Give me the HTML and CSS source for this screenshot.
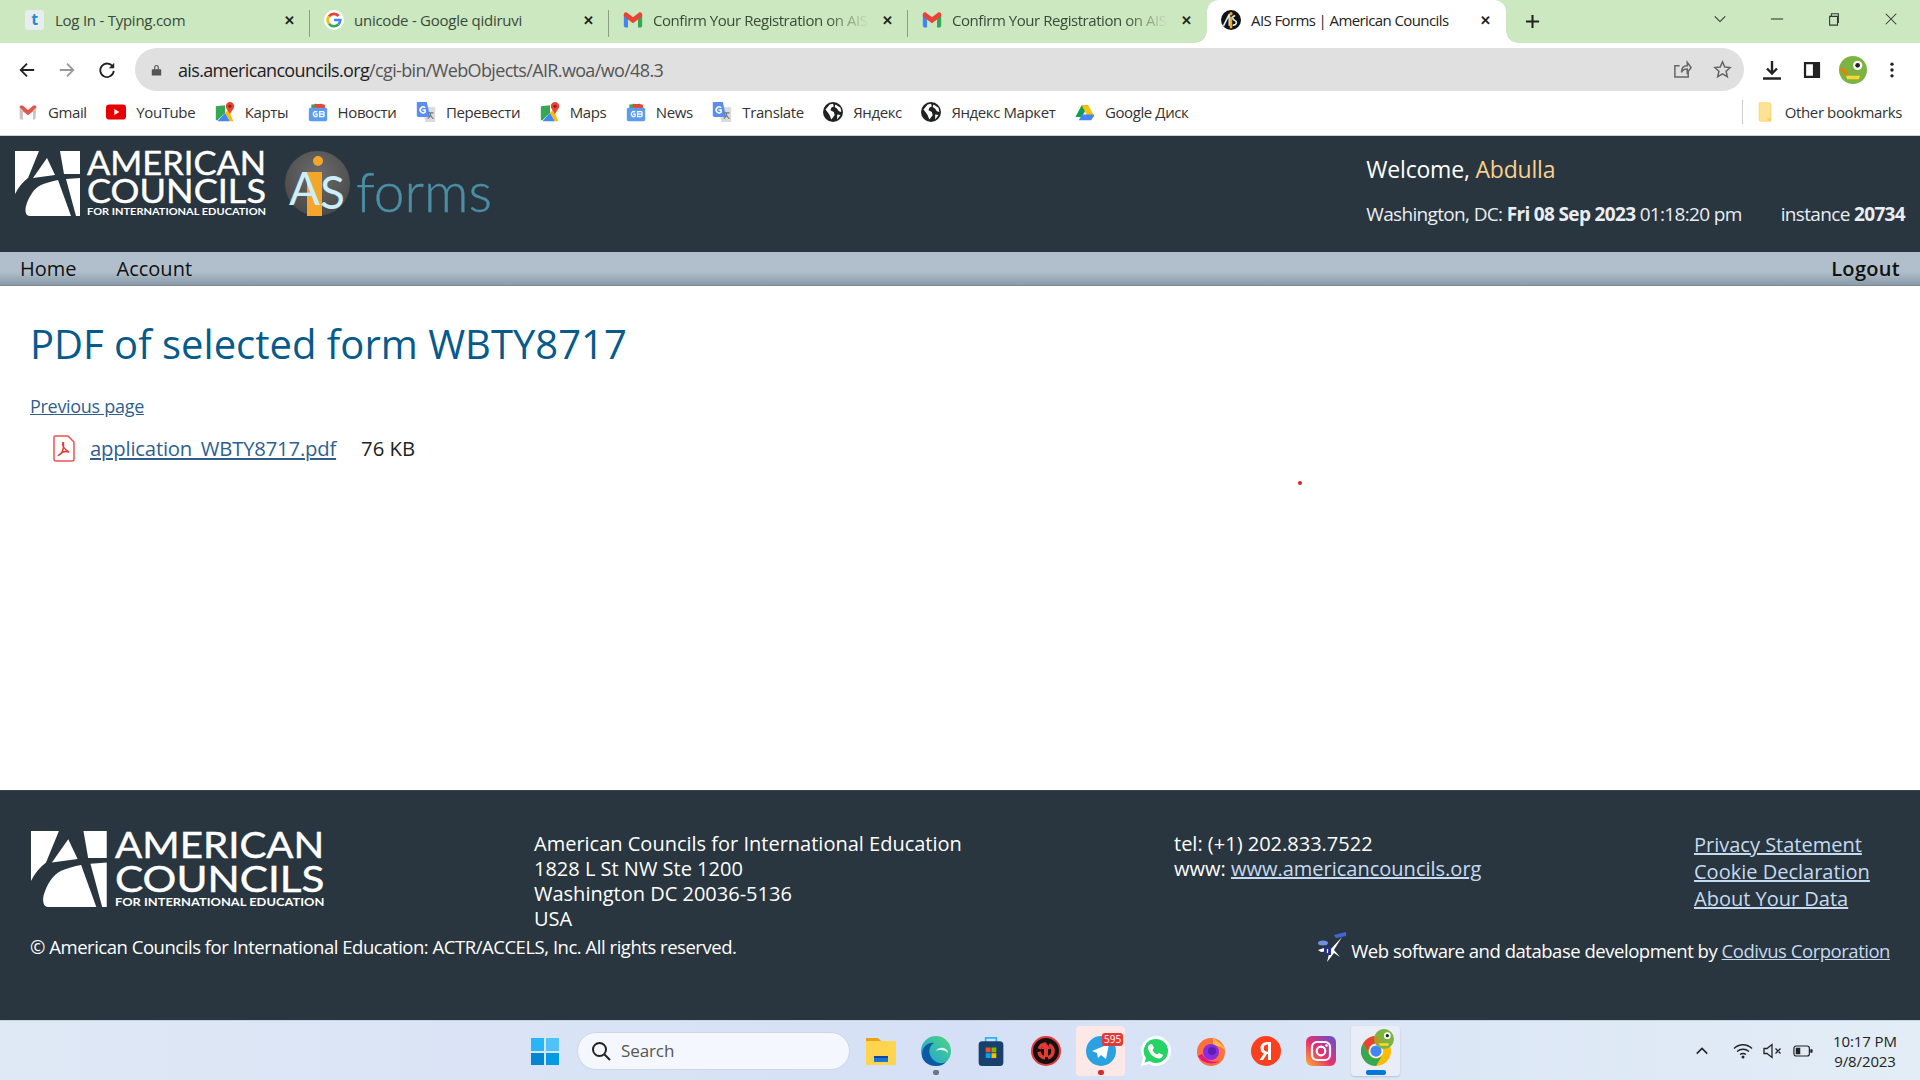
FILE: index.html
```html
<!DOCTYPE html>
<html lang="en">
<head>
    <meta charset="UTF-8">
    <title>AIS Forms | American Councils</title>
    <link rel="stylesheet" href="styles.css">
</head>
<body>

    <svg class="defs" width="0" height="0">
        <symbol id="i-gmail" viewBox="0 0 24 24">
            <path fill="#4285f4" d="M1 5h5v16H3a2 2 0 0 1-2-2z"/>
            <path fill="#34a853" d="M23 5h-5v16h3a2 2 0 0 0 2-2z"/>
            <path fill="#ea4335" d="M1 5.5C1 3 3.5 2 5 3.2l7 5.6 7-5.6c1.500-1.200 4-.2 4 2.300v2L18 11.500 12 16 6 11.500 1 7.500z"/>
        </symbol>
        <symbol id="i-gmailflat" viewBox="0 0 24 24">
            <path fill="#c9c5c2" d="M2 5h4v16H3.500A1.500 1.500 0 0 1 2 19.500zM22 5h-4v16h1.500a1.500 1.500 0 0 0 1.500-1.500z"/>
            <path fill="#e0564a" d="M2 6.500C2 4 4 3 6 4.500l6 5 6-5c2-1.500 4-.5 4 2L18 10v1l-6 5-6-5v-1z"/>
        </symbol>
        <symbol id="i-google" viewBox="0 0 24 24">
            <circle cx="12" cy="12" r="12" fill="#fff"/>
            <path fill="none" stroke="#ea4335" stroke-width="3.200" d="M17.600 7.200A7.500 7.500 0 0 0 6 7.600"/>
            <path fill="none" stroke="#fbbc05" stroke-width="3.200" d="M6 7.600a7.500 7.500 0 0 0 0 8.800"/>
            <path fill="none" stroke="#34a853" stroke-width="3.200" d="M6 16.400a7.500 7.500 0 0 0 11.200 1"/>
            <path fill="none" stroke="#4285f4" stroke-width="3.200" d="M17.200 17.400a7.500 7.500 0 0 0 2.300-5.400H12"/>
        </symbol>
        <symbol id="i-maps" viewBox="0 0 24 24">
            <path fill="#34a853" d="M1 5l11-1v9L3 22H1z"/>
            <path fill="#4285f4" d="M3 23l9-10 6 10z"/>
            <path fill="#fbbc05" d="M12 13l4-4 6 14h-4z"/>
            <path fill="#ea4335" d="M18 0a5 5 0 0 1 5 5c0 3.500-4 6-5 10-1-4-5-6.500-5-10a5 5 0 0 1 5-5z"/>
            <circle cx="18" cy="5" r="1.800" fill="#8e1c14"/>
        </symbol>
        <symbol id="i-globe" viewBox="0 0 24 24">
            <circle cx="12" cy="12" r="12" fill="#202124"/>
            <path fill="#fff" d="M3 9l5-6 4-1 1 3-3 2-1 3 4 2 1 4-4 5-2-5-2-3zM15 3l6 4 1 5-3-1-2-3-3-2zM17 15l4 .5-4 5.500z"/>
        </symbol>
        <symbol id="i-drive" viewBox="0 0 24 24">
            <path fill="#0f9d58" d="M8 3h8l-8 14H.500z" transform="translate(0 1)"/>
            <path fill="#ffc107" d="M8 4h8l7.500 14h-8z"/>
            <path fill="#4285f4" d="M4.500 22l4-7H23.500l-4 7z"/>
        </symbol>
        <symbol id="i-ais" viewBox="0 0 24 24">
            <circle cx="12" cy="12" r="12" fill="#111"/>
            <path fill="none" stroke="#cfeefc" stroke-width="2" d="M3 19L10 5v14M17 7c-5 0-3 5 0 6s1 6-3 5"/>
            <rect x="10.500" y="8" width="3" height="14" fill="#f4a62a"/>
            <circle cx="12" cy="4.500" r="2" fill="#f4a62a"/>
        </symbol>
        <symbol id="i-chrome" viewBox="0 0 48 48">
            <circle cx="24" cy="24" r="24" fill="#fbbc05"/>
            <path fill="#ea4335" d="M24 0a24 24 0 0 1 20.800 12H24a12 12 0 0 0-10.400 18L3.200 12A24 24 0 0 1 24 0z"/>
            <path fill="#34a853" d="M3.200 12l10.400 18A12 12 0 0 0 34.400 30L24 48A24 24 0 0 1 3.200 12z"/>
            <circle cx="24" cy="24" r="11.500" fill="#fff"/>
            <circle cx="24" cy="24" r="9" fill="#4285f4"/>
        </symbol>
        <symbol id="i-avatar" viewBox="0 0 24 24">
            <circle cx="12" cy="12" r="12" fill="#7cb342"/>
            <path fill="#f57c00" d="M2 9l6 6-2 2-5-5z"/>
            <path fill="#fdd835" d="M6 17h12l-1 3H7z"/>
            <circle cx="16" cy="8" r="4" fill="#fff"/>
            <circle cx="16" cy="8" r="2" fill="#222"/>
        </symbol>
        <symbol id="i-mark" viewBox="0 0 65 65">
            <path fill="#fff" d="M0 0h24L13 27Q5 33 0 43z"/>
            <path fill="#fff" d="M32 7l8 17-22 3z"/>
            <path fill="#fff" d="M45 0h20v23l-16 0z"/>
            <path fill="#fff" d="M15 65c-5 0-5-6-4-10 2-8 8-18 15-21 5-2 11-4 17-5l13 36z"/>
            <path fill="#fff" d="M51 28l14-1v38h-4z"/>
        </symbol>
    </svg>

    <div class="tabstrip">
        <div class="tab">
            <span class="typing-icon">t</span>
            <span class="tab-title">Log In - Typing.com</span>
            <span class="tab-close">✕</span>
        </div>
        <div class="tab">
            <svg class="tab-icon"><use href="#i-google"/></svg>
            <span class="tab-title">unicode - Google qidiruvi</span>
            <span class="tab-close">✕</span>
        </div>
        <div class="tab">
            <svg class="tab-icon"><use href="#i-gmail"/></svg>
            <span class="tab-title fade">Confirm Your Registration on AIS</span>
            <span class="tab-close">✕</span>
        </div>
        <div class="tab no-sep">
            <svg class="tab-icon"><use href="#i-gmail"/></svg>
            <span class="tab-title fade">Confirm Your Registration on AIS</span>
            <span class="tab-close">✕</span>
        </div>
        <div class="tab active">
            <svg class="tab-icon"><use href="#i-ais"/></svg>
            <span class="tab-title">AIS Forms | American Councils</span>
            <span class="tab-close">✕</span>
        </div>
        <svg class="new-tab" viewBox="0 0 16 16"><path d="M8 1v14M1 8h14"/></svg>
        <div class="window-btns">
            <svg viewBox="0 0 16 16"><path d="M2 5l6 6 6-6"/></svg>
            <svg viewBox="0 0 16 16"><path d="M1 8h14"/></svg>
            <svg viewBox="0 0 16 16"><path d="M3 5h9v10H3zM5 5V2h8v10h-1"/></svg>
            <svg viewBox="0 0 16 16"><path d="M2 2l12 12M14 2L2 14"/></svg>
        </div>
    </div>

    <div class="toolbar">
        <svg class="tool-btn" viewBox="0 0 20 20"><path d="M18 10H3M10 3l-7 7 7 7"/></svg>
        <svg class="tool-btn off" viewBox="0 0 20 20"><path d="M2 10h15M10 3l7 7-7 7"/></svg>
        <svg class="tool-btn" viewBox="0 0 20 20"><path d="M16.500 6.500A7.500 7.500 0 1 0 17.500 11"/><path class="solid" d="M18 2v6h-6z"/></svg>
        <div class="urlbar">
            <svg class="lock" viewBox="0 0 14 16"><path d="M2 7h10a1 1 0 0 1 1 1v7H1V8a1 1 0 0 1 1-1zM4 7V4.500a3 3 0 0 1 6 0V7H8.500V4.500a1.500 1.500 0 0 0-3 0V7z"/></svg>
            <span class="url"><span class="host">ais.americancouncils.org</span>/cgi-bin/WebObjects/AIR.woa/wo/48.3</span>
            <svg class="url-icon share" viewBox="0 0 20 20"><path d="M16 12v6H2V6h5M9 13c0-5 3-7 6-7V2.500L19 8l-4 5V9.500c-3 0-5 1-6 3.500z"/></svg>
            <svg class="url-icon" viewBox="0 0 20 20"><path d="M10 2l2.400 5.400 5.600.6-4.200 3.800 1.200 5.700L10 14.600 5 17.500l1.200-5.700L2 8l5.600-.6z"/></svg>
        </div>
        <svg class="tool-btn download" viewBox="0 0 20 20"><path d="M10 1v12M5 8.500l5 5 5-5M1 18.500h18" stroke-width="2.400"/></svg>
        <svg class="tool-btn panel" viewBox="0 0 20 20"><path class="solid" d="M1 1h18v18H1zM3.500 3.500v13H11v-13z"/></svg>
        <svg class="avatar"><use href="#i-avatar"/></svg>
        <svg class="tool-btn menu" viewBox="0 0 20 20"><circle class="solid" cx="10" cy="3.500" r="1.900"/><circle class="solid" cx="10" cy="10" r="1.900"/><circle class="solid" cx="10" cy="16.500" r="1.900"/></svg>
    </div>

    <div class="bookmarks">
        <a class="bm"><svg><use href="#i-gmailflat"/></svg>Gmail</a>
        <a class="bm"><svg viewBox="0 0 24 24"><rect y="3" width="24" height="18" rx="4" fill="#e60000"/><path fill="#fff" d="M10 8.500l6 3.500-6 3.500z"/></svg>YouTube</a>
        <a class="bm"><svg><use href="#i-maps"/></svg>Карты</a>
        <a class="bm">
            <svg viewBox="0 0 24 24"><path fill="#34a853" d="M4 3l13-1 1 6H4z"/><path fill="#ea4335" d="M8 2l12 1 1 6H8z"/><rect x="1" y="7" width="22" height="16" rx="2" fill="#5b9bf0"/><path fill="none" stroke="#fff" stroke-width="1.500" d="M11 12a3 3 0 1 0 0 5v-2.500H8.500M14 11.500h4a1.500 1.500 0 0 1 0 3h-4zM14 14.500h4a1.500 1.500 0 0 1 0 3h-4z"/></svg>
            Новости
        </a>
        <a class="bm">
            <svg viewBox="0 0 24 24"><path fill="#dadce0" d="M8 6h15v18H11z"/><path fill="#5b8def" d="M1 0h12l4 18H3a2 2 0 0 1-2-2z"/><path fill="none" stroke="#fff" stroke-width="1.800" d="M11 7a3.500 3.500 0 1 0 0 5V9.500H8"/><path fill="none" stroke="#70757a" stroke-width="1.300" d="M14 13h7M17.500 13c0 3-1.500 6-3.500 7M17 15c1 2 2 4 4 5"/></svg>
            Перевести
        </a>
        <a class="bm"><svg><use href="#i-maps"/></svg>Maps</a>
        <a class="bm">
            <svg viewBox="0 0 24 24"><path fill="#34a853" d="M4 3l13-1 1 6H4z"/><path fill="#ea4335" d="M8 2l12 1 1 6H8z"/><rect x="1" y="7" width="22" height="16" rx="2" fill="#5b9bf0"/><path fill="none" stroke="#fff" stroke-width="1.500" d="M11 12a3 3 0 1 0 0 5v-2.500H8.500M14 11.500h4a1.500 1.500 0 0 1 0 3h-4zM14 14.500h4a1.500 1.500 0 0 1 0 3h-4z"/></svg>
            News
        </a>
        <a class="bm">
            <svg viewBox="0 0 24 24"><path fill="#dadce0" d="M8 6h15v18H11z"/><path fill="#5b8def" d="M1 0h12l4 18H3a2 2 0 0 1-2-2z"/><path fill="none" stroke="#fff" stroke-width="1.800" d="M11 7a3.500 3.500 0 1 0 0 5V9.500H8"/><path fill="none" stroke="#70757a" stroke-width="1.300" d="M14 13h7M17.500 13c0 3-1.500 6-3.500 7M17 15c1 2 2 4 4 5"/></svg>
            Translate
        </a>
        <a class="bm"><svg><use href="#i-globe"/></svg>Яндекс</a>
        <a class="bm"><svg><use href="#i-globe"/></svg>Яндекс Маркет</a>
        <a class="bm"><svg><use href="#i-drive"/></svg>Google Диск</a>
        <a class="bm other"><svg viewBox="0 0 24 24"><path fill="#fde293" stroke="#f6d365" d="M5 1h12a2 2 0 0 1 2 2v20H7a2 2 0 0 1-2-2z"/><path fill="#f9d45c" d="M15 23v-4h4v4z"/></svg>Other bookmarks</a>
    </div>

    <header class="site-header">
        <div class="brand">
            <svg class="logo" viewBox="0 0 250 65">
                <use href="#i-mark" width="65" height="65"/>
                <text x="72" y="23.500" class="logo-big" textLength="179" lengthAdjust="spacingAndGlyphs">AMERICAN</text>
                <text x="72" y="52" class="logo-big" textLength="179" lengthAdjust="spacingAndGlyphs">COUNCILS</text>
                <text x="72" y="64" class="logo-small" textLength="179" lengthAdjust="spacingAndGlyphs">FOR INTERNATIONAL EDUCATION</text>
            </svg>
            <svg class="ais-logo" viewBox="0 0 210 65">
                <defs>
                    <radialGradient id="ais-bg" cx="0.5" cy="0.35" r="0.7">
                        <stop offset="0" stop-color="#6b6b6b"/>
                        <stop offset="1" stop-color="#474747"/>
                    </radialGradient>
                </defs>
                <circle cx="32.500" cy="32.500" r="32.500" fill="url(#ais-bg)"/>
                <rect x="22" y="21" width="15" height="44" fill="#f4a62a"/>
                <circle cx="33" cy="10" r="5" fill="#f4a62a"/>
                <text x="4" y="54" class="ais-letter">A</text>
                <text x="35" y="58" class="ais-letter">S</text>
                <text x="71" y="61" class="forms-word" textLength="136" lengthAdjust="spacingAndGlyphs">forms</text>
            </svg>
        </div>
        <div class="userbox">
            <div class="welcome">Welcome, <span class="username">Abdulla</span></div>
            <div class="session">
                <span>Washington, DC: <b>Fri 08 Sep 2023</b> 01:18:20 pm</span>
                <span>instance <b>20734</b></span>
            </div>
        </div>
    </header>

    <nav class="main-nav">
        <a>Home</a>
        <a>Account</a>
        <a class="logout">Logout</a>
    </nav>

    <main class="content">
        <h1>PDF of selected form WBTY8717</h1>
        <a class="prev" href="#">Previous page</a>
        <div class="file-row">
            <svg class="pdf-icon" viewBox="0 0 22 27">
                <path fill="#fff" stroke="#ef5350" stroke-width="1.500" d="M2 1h13l6 6v17a2 2 0 0 1-2 2H3a2 2 0 0 1-2-2V2a1 1 0 0 1 1-1z"/>
                <path fill="none" stroke="#e53935" stroke-width="1.400" d="M10 7c-1 3 1 7 6 10-3-1-7-.5-10 3 3-1 5-6 4.500-13"/>
            </svg>
            <a class="file-link" href="#">application_WBTY8717.pdf</a>
            <span class="file-size">76 KB</span>
        </div>
        <span class="red-dot"></span>
    </main>

    <footer class="site-footer">
        <div class="footer-top">
            <svg class="footer-logo" viewBox="0 0 250 65">
                <use href="#i-mark" width="65" height="65"/>
                <text x="72" y="23.500" class="logo-big" textLength="179" lengthAdjust="spacingAndGlyphs">AMERICAN</text>
                <text x="72" y="52" class="logo-big" textLength="179" lengthAdjust="spacingAndGlyphs">COUNCILS</text>
                <text x="72" y="64" class="logo-small" textLength="179" lengthAdjust="spacingAndGlyphs">FOR INTERNATIONAL EDUCATION</text>
            </svg>
            <div>
                American Councils for International Education<br>
                1828 L St NW Ste 1200<br>
                Washington DC 20036-5136<br>
                USA
            </div>
            <div>
                tel: (+1) 202.833.7522<br>
                www: <a href="#">www.americancouncils.org</a>
            </div>
            <div class="footer-links">
                <a href="#">Privacy Statement</a>
                <a href="#">Cookie Declaration</a>
                <a href="#">About Your Data</a>
            </div>
        </div>
        <div class="footer-bottom">
            <span class="copyright">© American Councils for International Education: ACTR/ACCELS, Inc. All rights reserved.</span>
            <div class="credit">
                <svg class="codivus" viewBox="0 0 30 30">
                    <path fill="#3f66d6" d="M17 3l12-3v4l-10 2z"/>
                    <ellipse cx="6" cy="11" rx="5" ry="2.500" fill="#6f8fe0"/>
                    <path fill="#fff" d="M25 5L13 18l-3 12 7-9 6 4-6-7zM1 18l9-3 1 4-7 1z"/>
                    <path fill="#25308a" d="M7 15h7v8H7z"/>
                    <path stroke="#fff" stroke-width="1.200" d="M10.500 17v4"/>
                </svg>
                <span class="credit-text">Web software and database development by <a href="#">Codivus Corporation</a></span>
            </div>
        </div>
    </footer>

    <div class="taskbar">
        <svg class="win-logo" viewBox="0 0 28 28">
            <path fill="#29b6f6" d="M0 1h13v13H0z"/><path fill="#4fc3f7" d="M15 1h13v13H15z"/>
            <path fill="#0288d1" d="M0 16h13v12H0z"/><path fill="#039be5" d="M15 16h13v12H15z"/>
        </svg>
        <div class="search">
            <svg viewBox="0 0 20 20"><circle cx="8.500" cy="8.500" r="6.500"/><path d="M13.500 13.500L19 19"/></svg>
            <span>Search</span>
        </div>
        <div class="apps">
            <div class="app">
                <svg viewBox="0 0 30 30">
                    <path fill="#e8a317" d="M0 2h12l3 3h-15z"/><path fill="#ffd54f" d="M0 5h30v24H0z"/>
                    <path fill="#1976d2" d="M8 20h14v6H8z"/><path fill="#0d47a1" d="M8 20h14v2H8z"/>
                </svg>
            </div>
            <div class="app">
                <svg viewBox="0 0 30 30">
                    <defs><linearGradient id="edge" x1="0" y1="1" x2="1" y2="0"><stop offset="0" stop-color="#1b9de2"/><stop offset="1" stop-color="#4fd87a"/></linearGradient></defs>
                    <circle cx="15" cy="15" r="15" fill="url(#edge)"/>
                    <path fill="#0c59a4" d="M1 19C1 10 8 6 13 7c-5 3-6 9-3 14s9 8 15 5c-3 3-6 4-10 4C7 30 1 25 1 19z"/>
                    <path fill="#dff3fb" d="M15 15c1-3 5-4 8-3 3 1 4 3 4 5-2-2-4-3-7-3-2 0-4 0-5 1z"/>
                </svg>
                <i class="dot grey"></i>
            </div>
            <div class="app">
                <svg viewBox="0 0 30 34">
                    <path fill="none" stroke="#29b6f6" stroke-width="2" d="M9 7V2h12v5"/>
                    <rect x="1" y="6" width="28" height="28" rx="4" fill="#17406d"/>
                    <path fill="#f25022" d="M9 13h5.500v5.500H9z"/><path fill="#7fba00" d="M15.500 13H21v5.500h-5.500z"/>
                    <path fill="#00a4ef" d="M9 19.500h5.500V25H9z"/><path fill="#ffb900" d="M15.500 19.500H21V25h-5.500z"/>
                </svg>
            </div>
            <div class="app">
                <svg viewBox="0 0 30 30">
                    <circle cx="15" cy="15" r="14" fill="#111" stroke="#e53935" stroke-width="2"/>
                    <circle cx="15" cy="15" r="7" fill="none" stroke="#e53935" stroke-width="3.500" stroke-dasharray="9 3"/>
                    <path fill="#e53935" d="M15 7l5 6h-3v8h-4v-8h-3z"/>
                </svg>
            </div>
            <div class="app tile-red">
                <svg viewBox="0 0 30 30">
                    <circle cx="15" cy="15" r="15" fill="#2aa1e0"/>
                    <path fill="#fff" d="M6 15l17-7-3 15-5-4-3 3-1-5z"/>
                </svg>
                <span class="badge">595</span>
                <i class="dot red"></i>
            </div>
            <div class="app">
                <svg viewBox="0 0 30 30">
                    <path fill="#fff" d="M15 0a15 15 0 0 1 0 30c-3 0-5-1-7-2l-8 2 2-8A15 15 0 0 1 15 0z"/>
                    <path fill="#25d366" d="M15 3a12 12 0 0 1 0 24c-2.500 0-4.500-.8-6.500-2l-5 1.500L5 22A12 12 0 0 1 15 3z"/>
                    <path fill="#fff" d="M11 8l2 4-1.500 2c1 2 2.500 3.500 4.500 4.500l2-1.500 4 2c-.5 2.500-2 3.500-4 3.500-5 0-11-6-11-11 0-2 1.500-3.500 4-3.500z"/>
                </svg>
            </div>
            <div class="app">
                <svg viewBox="0 0 30 30">
                    <circle cx="15" cy="16" r="14" fill="#ff7139"/>
                    <path fill="#ffbd4f" d="M17 0c1 5 9 6 12 14-4-4-8-4-12-5z"/>
                    <circle cx="15" cy="16" r="8" fill="#8a2be2"/>
                    <circle cx="16" cy="15" r="4" fill="#5a1fb0"/>
                    <path fill="#e31587" d="M2 20c4 7 14 10 22 5-7 2-14 0-18-7z"/>
                </svg>
            </div>
            <div class="app">
                <svg viewBox="0 0 30 30">
                    <circle cx="15" cy="15" r="15" fill="#fc3f1d"/>
                    <path fill="#fff" d="M17 6h3v18h-3v-6h-1l-4 6H8.500l4.500-6.500C10.500 16.500 9.500 15 9.500 12c0-4 3-6 7.500-6zm0 2.500c-3 0-4.300 1.300-4.300 3.700 0 2.300 1.300 3.500 4.300 3.500z"/>
                </svg>
            </div>
            <div class="app">
                <svg viewBox="0 0 30 30">
                    <defs><linearGradient id="insta" x1="0" y1="1" x2="1" y2="0"><stop offset="0" stop-color="#fdb32b"/><stop offset="0.45" stop-color="#e8306f"/><stop offset="1" stop-color="#5b51d8"/></linearGradient></defs>
                    <rect width="30" height="30" rx="6" fill="url(#insta)"/>
                    <rect x="6" y="6" width="18" height="18" rx="5" fill="none" stroke="#fff" stroke-width="2.200"/>
                    <circle cx="15" cy="15" r="4.300" fill="none" stroke="#fff" stroke-width="2.200"/>
                    <circle cx="20.500" cy="9.500" r="1.300" fill="#fff"/>
                </svg>
            </div>
            <div class="app tile-grey">
                <svg><use href="#i-chrome"/></svg>
                <svg class="app-avatar"><use href="#i-avatar"/></svg>
                <i class="dot blue"></i>
            </div>
        </div>
        <div class="tray">
            <svg class="tray-icon" viewBox="0 0 16 16"><path d="M2 11l6-6 6 6"/></svg>
            <svg class="tray-icon" viewBox="0 0 20 16"><path d="M1 5.500c5-5 13-5 18 0M4 8.500c3.500-3 8.500-3 12 0M7 11.500c2-1.300 4-1.300 6 0"/><circle class="solid" cx="10" cy="14" r="1.500"/></svg>
            <svg class="tray-icon" viewBox="0 0 20 16"><path d="M1 5.500h3L9 1.500v13l-5-4H1zM12.500 5.500l5 5M17.500 5.500l-5 5"/></svg>
            <svg class="tray-icon" viewBox="0 0 22 14"><rect x="1" y="1.500" width="17" height="11" rx="2.500"/><path class="solid" d="M3 3.500h5v7H3zM19 5h2.500v4H19z"/></svg>
            <div class="clock">10:17 PM<br>9/8/2023</div>
        </div>
    </div>

</body>
</html>
```

FILE: styles.css
```css
body {
    font-family: "Open Sans", "Noto Sans", sans-serif;
    margin: 0;
    width: 1920px;
    height: 1080px;
    overflow: hidden;
    display: flex;
    flex-direction: column;
    background-color: white;
    color: #222;
}

.defs {
    position: absolute;
}

/* browser */

.tabstrip {
    height: 43px;
    padding-left: 11px;
    flex: none;
    display: flex;
    align-items: stretch;
    background-color: #cce8c0;
}

.tab {
    width: 299px;
    flex: none;
    box-sizing: border-box;
    padding: 0 13px 3px 14px;
    position: relative;
    display: flex;
    align-items: center;
    gap: 10px;
    font-size: 15px;
    letter-spacing: -0.25px;
    color: #3a4a38;
}

.tab::after {
    content: "";
    position: absolute;
    right: 0;
    top: 10px;
    bottom: 6px;
    width: 1px;
    background-color: #8b9f84;
}

.tab.no-sep::after {
    display: none;
}

.tab.active {
    height: 45px;
    padding-bottom: 5px;
    letter-spacing: -0.6px;
    background-color: white;
    border-radius: 12px 12px 0 0;
    color: #222;
}

.tab.active::before,
.tab.active::after {
    content: "";
    position: absolute;
    top: auto;
    bottom: 2px;
    width: 12px;
    height: 12px;
    background: radial-gradient(circle at 0 0, transparent 11.500px, white 12px);
}

.tab.active::before {
    left: -12px;
}

.tab.active::after {
    right: -12px;
    background: radial-gradient(circle at 100% 0, transparent 11.500px, white 12px);
}

.tab-icon {
    width: 20px;
    height: 20px;
    flex: none;
}

.typing-icon {
    width: 19px;
    height: 20px;
    margin-right: 1px;
    flex: none;
    border-radius: 3px;
    background-color: #e8edf0;
    color: #1d8fd8;
    font-weight: 700;
    font-size: 16px;
    line-height: 19px;
    text-align: center;
}

.tab-title {
    flex: 1;
    white-space: nowrap;
}

.tab-title.fade {
    letter-spacing: -0.45px;
    -webkit-mask-image: linear-gradient(to right, black 80%, transparent 100%);
    mask-image: linear-gradient(to right, black 80%, transparent 100%);
}

.tab-close {
    width: 16px;
    flex: none;
    font-size: 13px;
    font-weight: 700;
    text-align: center;
    color: #222;
}

.new-tab {
    width: 15px;
    height: 15px;
    margin: 14px 0 0 19px;
    fill: none;
    stroke: #222;
    stroke-width: 2.200;
}

.window-btns {
    margin-left: auto;
    padding-right: 22px;
    display: flex;
    gap: 43px;
    align-items: flex-start;
}

.window-btns svg {
    width: 14px;
    height: 14px;
    margin-top: 12px;
    fill: none;
    stroke: #333;
    stroke-width: 1.200;
}

.toolbar {
    height: 50px;
    flex: none;
    box-sizing: border-box;
    padding: 5px 19px 2px 18px;
    display: flex;
    align-items: center;
    background-color: white;
}

.toolbar > svg {
    flex: none;
}

.tool-btn {
    width: 18px;
    height: 18px;
    margin-right: 22px;
    fill: none;
    stroke: #222;
    stroke-width: 2;
}

.tool-btn.off {
    stroke: #999;
}

.tool-btn .solid {
    fill: #222;
    stroke: none;
}

.tool-btn.download {
    width: 20px;
    height: 20px;
    margin-right: 21px;
}

.tool-btn.panel {
    margin-right: 18px;
}

.tool-btn.menu {
    margin: 0;
}

.urlbar {
    width: 1609px;
    height: 43px;
    flex: none;
    margin: 0 18px 0 -3px;
    box-sizing: border-box;
    padding: 0 12px 0 16px;
    display: flex;
    align-items: center;
    border-radius: 22px;
    background-color: #e0e0e0;
    font-size: 18px;
    letter-spacing: -0.65px;
    color: #555;
}

.lock {
    width: 11px;
    height: 14px;
    margin-right: 16px;
    fill: #555;
}

.url {
    flex: 1;
}

.host {
    color: #222;
}

.url-icon {
    width: 19px;
    height: 19px;
    margin-left: 21px;
    fill: none;
    stroke: #666;
    stroke-width: 1.600;
}

.avatar {
    width: 28px;
    height: 28px;
    margin-right: 16px;
}

.bookmarks {
    height: 43px;
    flex: none;
    box-sizing: border-box;
    padding: 0 18px 5px 18px;
    display: flex;
    align-items: center;
    gap: 19.600px;
    background-color: white;
    border-bottom: 1px solid #d0d0d0;
    font-size: 15px;
    letter-spacing: -0.4px;
    color: #333;
}

.bm {
    display: flex;
    align-items: center;
    gap: 10px;
    white-space: nowrap;
}

.bm svg {
    width: 20px;
    height: 20px;
}

.bm.other {
    margin-left: auto;
    padding-left: 12px;
    border-left: 1px solid #ccc;
    height: 24px;
}

/* site header */

.site-header {
    height: 116px;
    flex: none;
    box-sizing: border-box;
    padding: 15px 15px 0 15px;
    display: flex;
    justify-content: space-between;
    background-color: #29363f;
    color: white;
}

.brand {
    display: flex;
    gap: 20px;
}

.logo,
.footer-logo,
.ais-logo {
    overflow: visible;
}

.logo {
    width: 250px;
    height: 65px;
}

.ais-logo {
    width: 210px;
    height: 65px;
}

.logo-big {
    font-family: Lato, sans-serif;
    font-size: 32px;
    fill: white;
    stroke: white;
    stroke-width: 0.400px;
}

.logo-small {
    font-family: Lato, sans-serif;
    font-weight: 700;
    font-size: 9.500px;
    fill: white;
}

.ais-letter {
    font-family: Lato, sans-serif;
    font-size: 46px;
    fill: #cdeefd;
}

.forms-word {
    font-family: Lato, sans-serif;
    font-weight: 300;
    font-size: 56px;
    fill: #4b8ea6;
    stroke: #4b8ea6;
    stroke-width: 0.400px;
}

.welcome {
    font-size: 23px;
    letter-spacing: -0.2px;
    margin-top: 2px;
    line-height: 32px;
}

.username {
    color: #fbd08e;
}

.session {
    margin-top: 16px;
    display: flex;
    gap: 39px;
    font-size: 19px;
    letter-spacing: -0.66px;
    color: #eaeef2;
}

.main-nav {
    height: 34px;
    flex: none;
    box-sizing: border-box;
    padding: 0 20px;
    display: flex;
    align-items: center;
    gap: 40px;
    background: linear-gradient(#b0bfcb 0%, #b0bfcb 60%, #8a99a8 100%);
    border-bottom: 1px solid #7d8b99;
    font-size: 20px;
    color: #111;
}

.main-nav .logout {
    margin-left: auto;
    font-weight: 600;
    letter-spacing: 0.3px;
}

/* page */

.content {
    flex: 1;
    position: relative;
    padding: 0 30px;
}

h1 {
    margin: 33px 0 0 0;
    font-size: 40px;
    font-weight: 400;
    line-height: 50px;
    color: #065a8c;
}

.prev {
    display: block;
    margin-top: 25px;
    font-size: 18px;
    letter-spacing: -0.3px;
    color: #2f5f8f;
}

.file-row {
    margin: 16px 0 0 23px;
    display: flex;
    align-items: center;
    font-size: 20.300px;
}

.pdf-icon {
    width: 22px;
    height: 27px;
    margin-right: 15px;
}

.file-link {
    color: #2f5f8f;
    letter-spacing: -0.2px;
}

.file-size {
    margin-left: 25px;
}

.red-dot {
    position: absolute;
    left: 1298px;
    top: 195px;
    width: 4px;
    height: 4px;
    border-radius: 2px;
    background-color: #e02020;
}

.site-footer {
    height: 230px;
    flex: none;
    box-sizing: border-box;
    padding: 40px 30px 0 30px;
    background-color: #29363f;
    border-top: 1px solid #34495a;
    color: white;
    font-size: 20px;
}

.site-footer a {
    color: #c6daf0;
}

.footer-top {
    display: grid;
    grid-template-columns: 504px 640px 520px auto;
    line-height: 25px;
}

.footer-logo {
    width: 294px;
    height: 76px;
}

.footer-links {
    display: flex;
    flex-direction: column;
    line-height: 27px;
}

.footer-bottom {
    display: flex;
    justify-content: space-between;
    align-items: flex-start;
    margin-top: 1px;
    font-size: 18.500px;
    letter-spacing: -0.47px;
    line-height: 26px;
}

.copyright {
    margin-top: 2px;
}

.credit {
    display: flex;
    align-items: flex-start;
    gap: 4px;
}

.credit-text {
    margin-top: 6px;
}

.codivus {
    width: 30px;
    height: 30px;
}

/* windows taskbar */

.taskbar {
    height: 60px;
    flex: none;
    box-sizing: border-box;
    padding-left: 531px;
    display: flex;
    align-items: center;
    background: linear-gradient(to right, #dfe8f5, #d5e0f6 50%, #e3edf6);
    border-top: 1px solid #c8d2de;
}

.win-logo {
    width: 28px;
    height: 28px;
}

.search {
    width: 273px;
    height: 38px;
    margin-left: 18px;
    box-sizing: border-box;
    padding-left: 13px;
    display: flex;
    align-items: center;
    gap: 10px;
    border: 1px solid #cfd7e4;
    border-radius: 19px;
    background-color: #f4f7fd;
    font-size: 17px;
    letter-spacing: -0.1px;
    color: #555;
}

.search svg {
    width: 20px;
    height: 20px;
    fill: none;
    stroke: #222;
    stroke-width: 2;
}

.apps {
    margin-left: 3px;
    display: flex;
}

.app {
    width: 55px;
    height: 50px;
    position: relative;
    display: flex;
    align-items: center;
    justify-content: center;
}

.app svg {
    width: 30px;
    height: 30px;
    position: relative;
}

.tile-red::before,
.tile-grey::before {
    content: "";
    position: absolute;
    left: 3px;
    right: 3px;
    top: 0;
    bottom: 0;
    border-radius: 4px;
    background-color: #fde8e8;
}

.tile-grey::before {
    background-color: #e9edf7;
    box-shadow: 0 1px 2px rgba(0, 0, 0, 0.15);
}

.badge {
    position: absolute;
    left: 29px;
    top: 7px;
    padding: 0 2px;
    border-radius: 3px;
    background-color: #e53935;
    color: white;
    font-size: 10px;
    line-height: 13px;
}

.dot {
    position: absolute;
    bottom: 1px;
    left: 25px;
    width: 6px;
    height: 5px;
    border-radius: 2px;
}

.dot.grey {
    background-color: #6c7680;
}

.dot.red {
    background-color: #d32f2f;
}

.dot.blue {
    left: 18px;
    width: 20px;
    background-color: #0078d4;
}

.app svg.app-avatar {
    position: absolute;
    left: 26px;
    top: 3px;
    width: 20px;
    height: 20px;
}

.tray {
    margin-left: auto;
    padding-right: 20px;
    display: flex;
    align-items: center;
}

.tray-icon {
    width: 20px;
    height: 16px;
    margin-right: 10px;
    fill: none;
    stroke: #222;
    stroke-width: 1.300;
}

.tray-icon:first-child {
    width: 14px;
    margin-right: 24px;
    stroke-width: 1.800;
}

.tray-icon .solid {
    fill: #222;
    stroke: none;
}

.clock {
    width: 70px;
    margin-left: 7px;
    font-size: 15px;
    letter-spacing: -0.1px;
    line-height: 20px;
    text-align: center;
    color: #222;
}
```
